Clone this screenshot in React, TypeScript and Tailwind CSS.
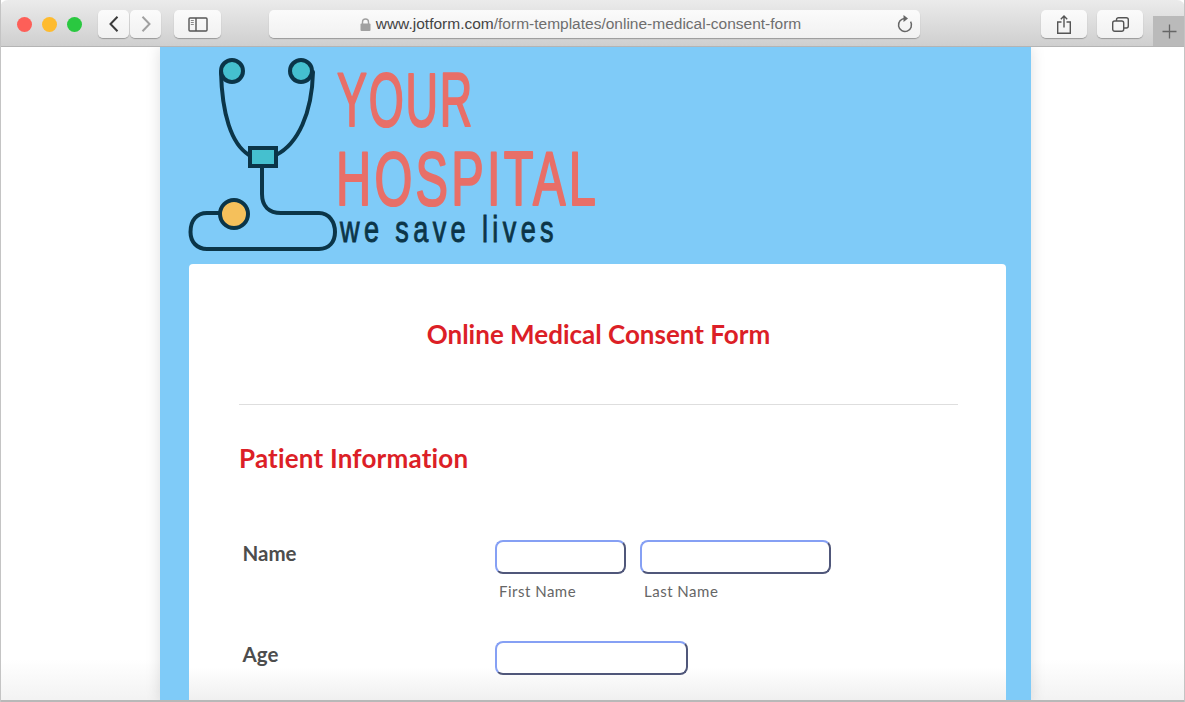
const toolbarBtn =
  "flex h-[28px] items-center justify-center rounded-[5px] bg-gradient-to-b from-[#fbfbfb] to-[#f1f1f1] shadow-[0_1px_1px_rgba(0,0,0,0.28)]";

const inputBorder =
  "h-[34px] rounded-[8px] border-2 border-t-[#86a0f4] border-l-[#86a0f4] border-r-[#50577a] border-b-[#50577a] bg-white";

const subLabel = "mt-[7px] pl-[4px] text-[15px] leading-[20px] tracking-[0.5px] text-[#666]";

function Toolbar() {
  return (
    <header className="relative flex h-[47px] shrink-0 rounded-t-[8px] border-b border-[#b4b4b4] bg-gradient-to-b from-[#ebebeb] to-[#cfcfcf] pt-[10px]">
      {/* traffic lights */}
      <div className="ml-[17px] flex h-[28px] items-center gap-[10px]">
        <span className="h-[15px] w-[15px] rounded-full bg-[#fd5f58]" />
        <span className="h-[15px] w-[15px] rounded-full bg-[#febb2e]" />
        <span className="h-[15px] w-[15px] rounded-full bg-[#2ac840]" />
      </div>

      <div className="ml-[16px] flex gap-px">
        <button className={`${toolbarBtn} w-[31px]`}>
          <svg width="10" height="16" viewBox="0 0 10 16" fill="none" stroke="#3b3b3b" strokeWidth="2">
            <path d="M8.500 0.800L1.500 8L8.500 15.200" />
          </svg>
        </button>
        <button className={`${toolbarBtn} w-[31px]`}>
          <svg width="10" height="16" viewBox="0 0 10 16" fill="none" stroke="#a0a0a0" strokeWidth="2">
            <path d="M1.500 0.800L8.500 8L1.500 15.200" />
          </svg>
        </button>
      </div>

      <button className={`${toolbarBtn} ml-[13px] w-[47px]`}>
        <svg width="20" height="15" viewBox="0 0 20 15" fill="none" stroke="#555" strokeWidth="1.400">
          <rect x="1" y="1" width="18" height="13" rx="1" />
          <path d="M8 1v13" />
          <path d="M2.800 3.500h3M2.800 5.500h3M2.800 7.500h3" strokeWidth="1" stroke="#888" />
        </svg>
      </button>

      {/* address bar */}
      <div className={`${toolbarBtn} relative ml-[48px] w-[651px] pr-[28px]`}>
        <svg width="11" height="13" viewBox="0 0 11 13" className="mr-[5px]">
          <path d="M2.500 6V4a3 3 0 0 1 6 0v2" fill="none" stroke="#a0a0a0" strokeWidth="1.400" />
          <rect x="0.500" y="5.500" width="10" height="7.500" rx="1" fill="#a0a0a0" />
        </svg>
        <span className="text-[15.5px] text-[#6e6e6e] font-['Liberation_Sans',sans-serif]">
          <span className="text-[#444]">www.jotform.com</span>/form-templates/online-medical-consent-form
        </span>
        <svg
          width="18"
          height="18"
          viewBox="0 0 18 18"
          fill="none"
          stroke="#666"
          strokeWidth="1.500"
          className="absolute right-[6px] top-[5px]"
        >
          <path d="M9 3.500A6.500 6.500 0 1 0 14.600 6.700" />
          <path d="M7.500 0L12 3.500L7.500 7Z" fill="#666" stroke="none" />
        </svg>
      </div>

      <button className={`${toolbarBtn} ml-[121px] w-[46px]`}>
        <svg width="14" height="19" viewBox="0 0 14 19" fill="none" stroke="#555" strokeWidth="1.400">
          <path d="M4.500 7H0.700v11.300h12.600V7H9.500" />
          <path d="M7 12.500V1.200M3.800 4.200L7 1l3.200 3.200" />
        </svg>
      </button>
      <button className={`${toolbarBtn} ml-[10px] w-[46px]`}>
        <svg width="17" height="15" viewBox="0 0 17 15" fill="none" stroke="#555" strokeWidth="1.400">
          <rect x="0.700" y="4" width="11" height="10.300" rx="2" />
          <path d="M4.500 4V2.700a2 2 0 0 1 2-2h7.800a2 2 0 0 1 2 2v6.300a2 2 0 0 1-2 2h-2.600" />
        </svg>
      </button>

      <div className="ml-[10px] mt-[6px] flex h-[30px] w-[32px] items-center justify-center bg-[#bababa]">
        <svg width="15" height="15" viewBox="0 0 15 15" stroke="#666" strokeWidth="1.300">
          <path d="M7.500 0.500v14M0.500 7.500h14" />
        </svg>
      </div>
    </header>
  );
}

function HospitalLogo() {
  return (
    <svg width="720" height="216" viewBox="0 0 720 216" className="block">
      <g fill="none" stroke="#0b3548" strokeWidth="4" strokeLinecap="round">
        {/* ear tubes */}
        <path d="M33 24C34 65 43 96 61 107" />
        <path d="M125 24C124 65 110 96 88 107" />
        {/* main tube */}
        <path d="M74 119V146C74 158 81 165 93 165H131C141 165 147 174 147 184C147 194 141 201 131 201H19C9 201 2.500 194 2.500 184C2.500 172 9 165 19 165H33" />
        <circle cx="44" cy="23" r="11" fill="#45c0cf" />
        <circle cx="113" cy="23" r="11" fill="#45c0cf" />
        <circle cx="46" cy="166" r="14" fill="#f5c05b" />
      </g>
      <rect x="62" y="100" width="26" height="18" fill="#45c0cf" stroke="#0b3548" strokeWidth="4" />
      <g
        fill="#e86f68"
        stroke="#e86f68"
        strokeWidth="2.200"
        strokeLinejoin="round"
        fontFamily="'Liberation Sans', sans-serif"
      >
        <text x="149" y="78" fontSize="76" letterSpacing="3" textLength="137" lengthAdjust="spacingAndGlyphs">
          YOUR
        </text>
        <text x="148" y="157" fontSize="76" letterSpacing="5" textLength="263" lengthAdjust="spacingAndGlyphs">
          HOSPITAL
        </text>
      </g>
      <text
        x="152"
        y="194"
        fill="#0b3548"
        stroke="#0b3548"
        strokeWidth="0.900"
        fontSize="37"
        letterSpacing="6"
        fontFamily="'Liberation Sans', sans-serif"
        textLength="218"
        lengthAdjust="spacingAndGlyphs"
      >
        we save lives
      </text>
    </svg>
  );
}

function FormRow({ label, children }: { label: string; children: React.ReactNode }) {
  return (
    <div className="flex">
      <label className="ml-[3.500px] w-[252.500px] shrink-0 text-[20.500px] leading-[26px] font-bold text-[#4d4d4d]">
        {label}
      </label>
      {children}
    </div>
  );
}

export default function App() {
  return (
    <div className="relative flex h-[702px] w-[1185px] flex-col overflow-hidden bg-gradient-to-b from-white from-[94%] to-[#f2f2f2] font-['Lato',sans-serif]">
      <Toolbar />

      <main className="ml-[160px] h-[655px] w-[871px] bg-[#7fcbf8] pl-[29px] pr-[25px] shadow-[0_0_14px_rgba(0,0,0,0.13)]">
        <div className="-ml-[1px] h-[217px] pt-[1px]">
          <HospitalLogo />
        </div>

        <section className="h-[438px] rounded-t-[4px] bg-gradient-to-b from-white from-[92%] to-[#efefef] px-[50px] pt-[54px]">
          <h1 className="pl-[2px] text-center text-[26px] leading-[32px] font-bold text-[#dc1f27]">
            Online Medical Consent Form
          </h1>

          <hr className="mt-[54px] w-[719px] border-[#dedede]" />

          <h2 className="mt-[37px] text-[26px] leading-[32px] font-bold tracking-[0.2px] text-[#dc1f27]">
            Patient Information
          </h2>

          <div className="mt-[66px]">
            <FormRow label="Name">
              <div className="flex gap-[14px]">
                <div>
                  <div className={`${inputBorder} w-[131px]`} />
                  <p className={subLabel}>First Name</p>
                </div>
                <div>
                  <div className={`${inputBorder} w-[191px]`} />
                  <p className={subLabel}>Last Name</p>
                </div>
              </div>
            </FormRow>
          </div>

          <div className="mt-[40px]">
            <FormRow label="Age">
              <div className={`${inputBorder} w-[193px]`} />
            </FormRow>
          </div>
        </section>
      </main>

      {/* window edge drawn over the page */}
      <div className="absolute inset-x-0 bottom-0 h-[2px] bg-[#b8b8b8]" />
      <div className="absolute inset-y-0 left-0 w-px bg-[#c4c4c4]" />
      <div className="absolute inset-y-0 right-0 w-px bg-[#c4c4c4]" />
    </div>
  );
}
